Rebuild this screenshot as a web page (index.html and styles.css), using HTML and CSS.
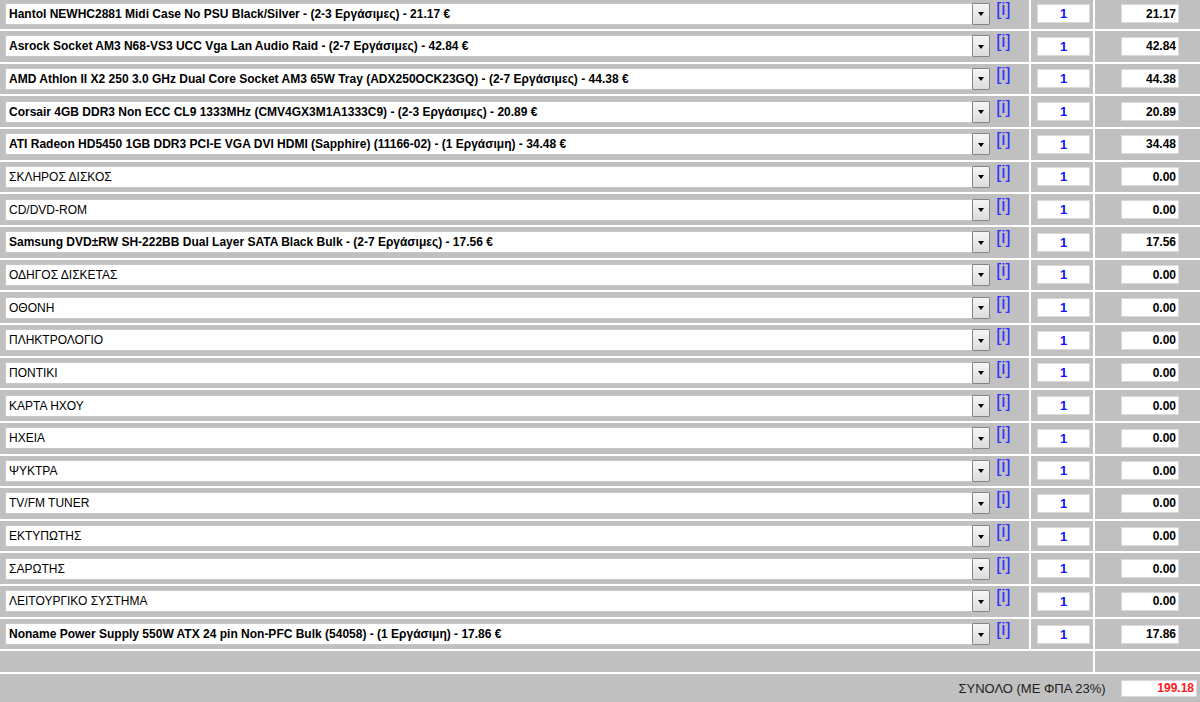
FILE: index.html
```html
<!DOCTYPE html>
<html lang="el">

<head>
    <meta charset="UTF-8">
    <title>Συναρμολόγηση PC</title>
    <link rel="stylesheet" href="styles.css">
</head>

<body>
    <table class="builder">
        <colgroup>
            <col class="col_part">
            <col class="col_qty">
            <col class="col_price">
        </colgroup>
        <tr>
            <td class="part">
                <div class="line">
                    <div class="pick"><select class="prod"><option>Hantol NEWHC2881 Midi Case No PSU Black/Silver - (2-3 Εργάσιμες) - 21.17 €</option></select><span class="arrow"></span></div>
                    <a class="info" href="#">[i]</a>
                </div>
            </td>
            <td class="qty"><input type="text" value="1"></td>
            <td class="price"><input type="text" value="21.17"></td>
        </tr>
        <tr>
            <td class="part">
                <div class="line">
                    <div class="pick"><select class="prod"><option>Asrock Socket AM3 N68-VS3 UCC Vga Lan Audio Raid - (2-7 Εργάσιμες) - 42.84 €</option></select><span class="arrow"></span></div>
                    <a class="info" href="#">[i]</a>
                </div>
            </td>
            <td class="qty"><input type="text" value="1"></td>
            <td class="price"><input type="text" value="42.84"></td>
        </tr>
        <tr>
            <td class="part">
                <div class="line">
                    <div class="pick"><select class="prod"><option>AMD Athlon II X2 250 3.0 GHz Dual Core Socket AM3 65W Tray (ADX250OCK23GQ) - (2-7 Εργάσιμες) - 44.38 €</option></select><span class="arrow"></span></div>
                    <a class="info" href="#">[i]</a>
                </div>
            </td>
            <td class="qty"><input type="text" value="1"></td>
            <td class="price"><input type="text" value="44.38"></td>
        </tr>
        <tr>
            <td class="part">
                <div class="line">
                    <div class="pick"><select class="prod"><option>Corsair 4GB DDR3 Non ECC CL9 1333MHz (CMV4GX3M1A1333C9) - (2-3 Εργάσιμες) - 20.89 €</option></select><span class="arrow"></span></div>
                    <a class="info" href="#">[i]</a>
                </div>
            </td>
            <td class="qty"><input type="text" value="1"></td>
            <td class="price"><input type="text" value="20.89"></td>
        </tr>
        <tr>
            <td class="part">
                <div class="line">
                    <div class="pick"><select class="prod"><option>ATI Radeon HD5450 1GB DDR3 PCI-E VGA DVI HDMI (Sapphire) (11166-02) - (1 Εργάσιμη) - 34.48 €</option></select><span class="arrow"></span></div>
                    <a class="info" href="#">[i]</a>
                </div>
            </td>
            <td class="qty"><input type="text" value="1"></td>
            <td class="price"><input type="text" value="34.48"></td>
        </tr>
        <tr>
            <td class="part">
                <div class="line">
                    <div class="pick"><select><option>ΣΚΛΗΡΟΣ ΔΙΣΚΟΣ</option></select><span class="arrow"></span></div>
                    <a class="info" href="#">[i]</a>
                </div>
            </td>
            <td class="qty"><input type="text" value="1"></td>
            <td class="price"><input type="text" value="0.00"></td>
        </tr>
        <tr>
            <td class="part">
                <div class="line">
                    <div class="pick"><select><option>CD/DVD-ROM</option></select><span class="arrow"></span></div>
                    <a class="info" href="#">[i]</a>
                </div>
            </td>
            <td class="qty"><input type="text" value="1"></td>
            <td class="price"><input type="text" value="0.00"></td>
        </tr>
        <tr>
            <td class="part">
                <div class="line">
                    <div class="pick"><select class="prod"><option>Samsung DVD±RW SH-222BB Dual Layer SATA Black Bulk - (2-7 Εργάσιμες) - 17.56 €</option></select><span class="arrow"></span></div>
                    <a class="info" href="#">[i]</a>
                </div>
            </td>
            <td class="qty"><input type="text" value="1"></td>
            <td class="price"><input type="text" value="17.56"></td>
        </tr>
        <tr>
            <td class="part">
                <div class="line">
                    <div class="pick"><select><option>ΟΔΗΓΟΣ ΔΙΣΚΕΤΑΣ</option></select><span class="arrow"></span></div>
                    <a class="info" href="#">[i]</a>
                </div>
            </td>
            <td class="qty"><input type="text" value="1"></td>
            <td class="price"><input type="text" value="0.00"></td>
        </tr>
        <tr>
            <td class="part">
                <div class="line">
                    <div class="pick"><select><option>ΟΘΟΝΗ</option></select><span class="arrow"></span></div>
                    <a class="info" href="#">[i]</a>
                </div>
            </td>
            <td class="qty"><input type="text" value="1"></td>
            <td class="price"><input type="text" value="0.00"></td>
        </tr>
        <tr>
            <td class="part">
                <div class="line">
                    <div class="pick"><select><option>ΠΛΗΚΤΡΟΛΟΓΙΟ</option></select><span class="arrow"></span></div>
                    <a class="info" href="#">[i]</a>
                </div>
            </td>
            <td class="qty"><input type="text" value="1"></td>
            <td class="price"><input type="text" value="0.00"></td>
        </tr>
        <tr>
            <td class="part">
                <div class="line">
                    <div class="pick"><select><option>ΠΟΝΤΙΚΙ</option></select><span class="arrow"></span></div>
                    <a class="info" href="#">[i]</a>
                </div>
            </td>
            <td class="qty"><input type="text" value="1"></td>
            <td class="price"><input type="text" value="0.00"></td>
        </tr>
        <tr>
            <td class="part">
                <div class="line">
                    <div class="pick"><select><option>ΚΑΡΤΑ ΗΧΟΥ</option></select><span class="arrow"></span></div>
                    <a class="info" href="#">[i]</a>
                </div>
            </td>
            <td class="qty"><input type="text" value="1"></td>
            <td class="price"><input type="text" value="0.00"></td>
        </tr>
        <tr>
            <td class="part">
                <div class="line">
                    <div class="pick"><select><option>ΗΧΕΙΑ</option></select><span class="arrow"></span></div>
                    <a class="info" href="#">[i]</a>
                </div>
            </td>
            <td class="qty"><input type="text" value="1"></td>
            <td class="price"><input type="text" value="0.00"></td>
        </tr>
        <tr>
            <td class="part">
                <div class="line">
                    <div class="pick"><select><option>ΨΥΚΤΡΑ</option></select><span class="arrow"></span></div>
                    <a class="info" href="#">[i]</a>
                </div>
            </td>
            <td class="qty"><input type="text" value="1"></td>
            <td class="price"><input type="text" value="0.00"></td>
        </tr>
        <tr>
            <td class="part">
                <div class="line">
                    <div class="pick"><select><option>TV/FM TUNER</option></select><span class="arrow"></span></div>
                    <a class="info" href="#">[i]</a>
                </div>
            </td>
            <td class="qty"><input type="text" value="1"></td>
            <td class="price"><input type="text" value="0.00"></td>
        </tr>
        <tr>
            <td class="part">
                <div class="line">
                    <div class="pick"><select><option>ΕΚΤΥΠΩΤΗΣ</option></select><span class="arrow"></span></div>
                    <a class="info" href="#">[i]</a>
                </div>
            </td>
            <td class="qty"><input type="text" value="1"></td>
            <td class="price"><input type="text" value="0.00"></td>
        </tr>
        <tr>
            <td class="part">
                <div class="line">
                    <div class="pick"><select><option>ΣΑΡΩΤΗΣ</option></select><span class="arrow"></span></div>
                    <a class="info" href="#">[i]</a>
                </div>
            </td>
            <td class="qty"><input type="text" value="1"></td>
            <td class="price"><input type="text" value="0.00"></td>
        </tr>
        <tr>
            <td class="part">
                <div class="line">
                    <div class="pick"><select><option>ΛΕΙΤΟΥΡΓΙΚΟ ΣΥΣΤΗΜΑ</option></select><span class="arrow"></span></div>
                    <a class="info" href="#">[i]</a>
                </div>
            </td>
            <td class="qty"><input type="text" value="1"></td>
            <td class="price"><input type="text" value="0.00"></td>
        </tr>
        <tr>
            <td class="part">
                <div class="line">
                    <div class="pick"><select class="prod"><option>Noname Power Supply 550W ATX 24 pin Non-PFC Bulk (54058) - (1 Εργάσιμη) - 17.86 €</option></select><span class="arrow"></span></div>
                    <a class="info" href="#">[i]</a>
                </div>
            </td>
            <td class="qty"><input type="text" value="1"></td>
            <td class="price"><input type="text" value="17.86"></td>
        </tr>
        <tr class="empty">
            <td colspan="2"></td>
            <td></td>
        </tr>
        <tr class="sum">
            <td colspan="3">
                <span class="sum_label">ΣΥΝΟΛΟ (ΜΕ ΦΠΑ 23%)</span>
                <input type="text" value="199.18">
            </td>
        </tr>
    </table>
</body>

</html>
```

FILE: styles.css
```css
html,
body {
    margin: 0;
    padding: 0;
    overflow: hidden;
    background: #fff;
}

body {
    font-family: "Liberation Sans", Arial, sans-serif;
    font-size: 12px;
}

.builder {
    border-collapse: separate;
    border-spacing: 2px;
    table-layout: fixed;
    background: #fff;
    margin: -3.7px 0 0 -2px;
    width: 1208px;
}

.col_part {
    width: 1029px;
}

.col_qty {
    width: 62px;
}

.col_price {
    width: 109px;
}

.builder td {
    background: #c0c0c0;
    padding: 0;
    height: 30.66px;
    vertical-align: middle;
}

.line {
    display: flex;
    align-items: flex-start;
    padding-left: 5px;
}

.pick {
    display: flex;
    width: 985px;
    height: 22px;
    box-sizing: border-box;
    border: 1px solid #c8c8c8;
    background: #fff;
}

.pick select {
    flex: 1;
    appearance: none;
    -webkit-appearance: none;
    border: 0;
    outline: none;
    background: transparent;
    font-family: "Liberation Sans", Arial, sans-serif;
    font-size: 12px;
    color: #000;
    padding: 0 3px;
    height: 100%;
}

.pick select.prod {
    font-weight: bold;
}

.arrow {
    width: 16px;
    margin: -1px -1px -1px 0;
    border: 1px solid #858585;
    border-radius: 1px;
    background: linear-gradient(#f6f6f6, #dcdcdc);
    display: flex;
    align-items: center;
    justify-content: center;
}

.arrow::after {
    content: "";
    border-left: 3.5px solid transparent;
    border-right: 3.5px solid transparent;
    border-top: 4px solid #000;
    margin-top: 1px;
}

.info {
    margin-left: 6px;
    margin-top: -4px;
    font-size: 19px;
    line-height: 19px;
    color: #3030ff;
    text-decoration: none;
}

.builder td.qty {
    padding-left: 6px;
}

.qty input,
.price input,
.sum input {
    box-sizing: border-box;
    height: 19px;
    border: 1px solid #dadada;
    background: #fff;
    font-family: "Liberation Sans", Arial, sans-serif;
    font-size: 12px;
    font-weight: bold;
    padding: 0 2px;
    outline: none;
    display: block;
}

.qty input {
    width: 53px;
    font-size: 13px;
    text-align: center;
    color: #1010ff;
}

.builder td.price {
    padding-left: 26px;
}

.price input {
    width: 58px;
    text-align: right;
    color: #000;
}

.builder tr.empty td {
    height: 20.2px;
}

.builder tr.sum td {
    height: 29px;
    text-align: right;
    padding-right: 7px;
}

.sum_label {
    font-size: 13px;
    color: #222;
    vertical-align: middle;
    margin-right: 12px;
}

.sum input {
    display: inline-block;
    vertical-align: middle;
    width: 76px;
    height: 17px;
    color: #ff1a1a;
    text-align: right;
}
```
